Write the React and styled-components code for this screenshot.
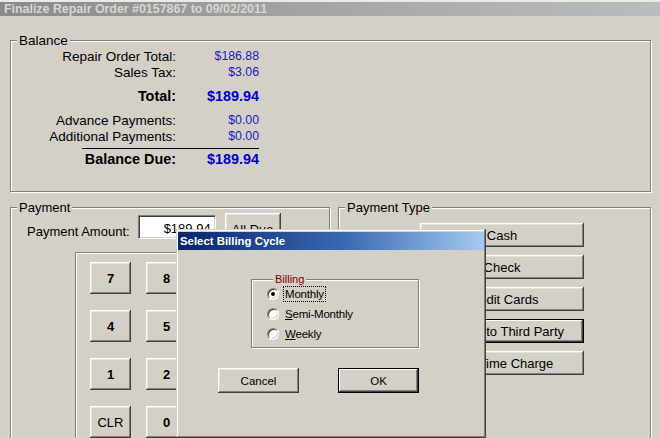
import React from "react";
import styled, { createGlobalStyle, css } from "styled-components";

const Global = createGlobalStyle`
  html, body { margin: 0; padding: 0; }
  body {
    width: 660px; height: 438px; overflow: hidden;
    background: #d4d0c8;
    font-family: "Liberation Sans", Arial, sans-serif;
    color: #000;
  }
`;

const Window = styled.div`
  position: relative;
  width: 660px;
  height: 438px;
  box-sizing: border-box;
  border-top: 2px solid #ecebe8;
  display: flex;
  flex-direction: column;
  overflow: hidden;
`;

const TitleBar = styled.div`
  height: 20px;
  padding-left: 4px;
  display: flex;
  align-items: center;
  background: linear-gradient(90deg, #8a8a8a 0%, #a6a6a6 50%, #b9bdc0 100%);
  color: #d8d6d0;
  font-weight: bold;
  font-size: 12.4px;
  white-space: nowrap;
`;

const Body = styled.div`
  flex: 1;
  padding: 17px 9px 0 10px;
  display: flex;
  flex-direction: column;
`;

const etched = css`
  border: 1px solid #808080;
  box-shadow: 1px 1px 0 #fff, inset 1px 1px 0 #fff;
`;

const Group = styled.fieldset`
  ${etched};
  margin: 0;
  padding: 0;
  min-width: 0;
  box-sizing: border-box;
`;

const Legend = styled.legend`
  margin-left: 6px;
  padding: 0 2px;
  font-size: ${(p) => p.$size || 13}px;
  line-height: 15px;
  color: ${(p) => p.$color || "#000"};
  background: #d4d0c8;
`;

const BalanceGroup = styled(Group)`
  width: 641px;
  height: 159px;
`;

const Rows = styled.div`
  display: flex;
  flex-direction: column;
`;

const Row = styled.div`
  display: grid;
  grid-template-columns: 165px 83px;
  height: 16px;
  align-items: center;
  margin-top: ${(p) => p.$mt || 0}px;
`;

const Label = styled.span`
  text-align: right;
  font-size: ${(p) => (p.$bold ? 14.4 : 13.5)}px;
  font-weight: ${(p) => (p.$bold ? "bold" : "normal")};
  white-space: nowrap;
`;

const Value = styled.span`
  text-align: right;
  font-size: ${(p) => (p.$bold ? 14.4 : 12.3)}px;
  font-weight: ${(p) => (p.$bold ? "bold" : "normal")};
  color: ${(p) => (p.$bold ? "#0000cc" : "#1818c4")};
  white-space: nowrap;
`;

const Divider = styled.div`
  height: 1px;
  width: 177px;
  margin: 4px 0 0 71px;
  background: #000;
`;

const LowerRow = styled.div`
  display: flex;
  gap: 8px;
  margin-top: 8px;
  flex: 1;
`;

const PaymentGroup = styled(Group)`
  width: 320px;
  height: 260px;
`;

const TypeGroup = styled(Group)`
  width: 313px;
  height: 260px;
`;

const AmountRow = styled.div`
  display: flex;
  align-items: flex-start;
  height: 24px;
  padding-left: 16px;
`;

const AmountLabel = styled.span`
  font-size: 13px;
  margin-top: 9px;
  white-space: nowrap;
`;

const TextBox = styled.div`
  width: 78px;
  height: 24px;
  margin: 0 0 0 8px;
  box-sizing: border-box;
  background: #fff;
  border: 1px solid;
  border-color: #808080 #fff #fff #808080;
  box-shadow: inset 1px 1px 0 #404040, inset -1px -1px 0 #d4d0c8;
  font-size: 13px;
  text-align: right;
  padding: 5px 4px 0 0;
`;

const raised = css`
  background: #d4d0c8;
  border: none;
  box-sizing: border-box;
  box-shadow: inset -1px -1px 0 #404040, inset 1px 1px 0 #fff,
    inset -2px -2px 0 #808080, inset 2px 2px 0 #e4e2dc;
  font-family: "Liberation Sans", Arial, sans-serif;
  color: #000;
  padding: 0;
`;

const Button = styled.button`
  ${raised};
  flex-shrink: 0;
  width: ${(p) => p.$w}px;
  height: ${(p) => p.$h}px;
  font-size: ${(p) => p.$size || 13}px;
  font-weight: ${(p) => (p.$bold ? "bold" : "normal")};
  ${(p) =>
    p.$default &&
    css`
      outline: 1px solid #000;
      outline-offset: -1px;
      box-shadow: inset -2px -2px 0 #404040, inset 2px 2px 0 #fff,
        inset -3px -3px 0 #808080, inset 1px 1px 0 #000;
    `}
`;

const SideButton = styled(Button)`
  margin: -2px 0 0 9px;
`;

const Keypad = styled.div`
  ${etched};
  margin: 13px 0 0 64px;
  width: 200px;
  height: 200px;
  box-sizing: border-box;
  padding: 9px 0 0 14px;
  display: grid;
  grid-template-columns: repeat(3, 41px);
  grid-auto-rows: 32px;
  column-gap: 15px;
  row-gap: 16px;
`;

const TypeList = styled.div`
  display: flex;
  flex-direction: column;
  gap: 8px;
  padding: 8px 0 0 81px;
`;

/* Dialog */
const Dialog = styled.div`
  position: absolute;
  left: 176px;
  top: 227px;
  width: 310px;
  height: 209px;
  box-sizing: border-box;
  background: #d4d0c8;
  padding: 2px;
  box-shadow: inset -1px -1px 0 #404040, inset 1px 1px 0 #d4d0c8,
    inset -2px -2px 0 #808080, inset 2px 2px 0 #fff;
  display: flex;
  flex-direction: column;
`;

const DialogTitle = styled.div`
  height: 18px;
  margin: 1px 0 0 0;
  padding-left: 2px;
  display: flex;
  align-items: center;
  background: linear-gradient(90deg, #0a246a 0%, #3a6ab4 55%, #a6caf0 100%);
  color: #fff;
  font-weight: bold;
  font-size: 11.4px;
  white-space: nowrap;
`;

const DialogBody = styled.div`
  display: flex;
  flex-direction: column;
  padding: 22px 0 0 0;
`;

const BillingGroup = styled(Group)`
  width: 168px;
  margin-left: 73px;
  height: 76px;
  padding: 0 0 0 15px;
`;

const RadioList = styled.div`
  display: flex;
  flex-direction: column;
  margin-top: -3px;
`;

const RadioRow = styled.label`
  display: flex;
  align-items: center;
  height: 20px;
  font-size: 11.5px;
`;

const RadioCircle = styled.span`
  width: 12px;
  height: 12px;
  box-sizing: border-box;
  border-radius: 50%;
  background: #fff;
  border: 1px solid;
  border-color: #808080 #fff #fff #808080;
  box-shadow: inset 1px 1px 0 #404040, inset -1px -1px 0 #d4d0c8;
  display: flex;
  align-items: center;
  justify-content: center;
  margin-right: 5px;
  &::after {
    content: "";
    display: ${(p) => (p.$checked ? "block" : "none")};
    width: 4px;
    height: 4px;
    border-radius: 50%;
    background: #000;
  }
`;

const RadioText = styled.span`
  padding: 0 1px;
  line-height: 14px;
  letter-spacing: -0.2px;
  outline: ${(p) => (p.$focus ? "1px dotted #000" : "none")};
  u { text-decoration: underline; }
`;

const DialogButtons = styled.div`
  display: flex;
  gap: 39px;
  margin: 20px 0 0 40px;
`;

const balance = [
  { l: "Repair Order Total:", v: "$186.88" },
  { l: "Sales Tax:", v: "$3.06" },
  { l: "Total:", v: "$189.94", bold: true, mt: 8 },
  { l: "Advance Payments:", v: "$0.00", mt: 8 },
  { l: "Additional Payments:", v: "$0.00" },
];

const keys = ["7", "8", "9", "4", "5", "6", "1", "2", "3", "CLR", "0", "."];
const types = ["Cash", "Check", "Credit Cards", "Charge to Third Party", "One Time Charge"];

export default function App() {
  return (
    <>
      <Global />
      <Window>
        <TitleBar>Finalize Repair Order #0157867 to 09/02/2011</TitleBar>
        <Body>
          <BalanceGroup>
            <Legend $size={13.5}>Balance</Legend>
            <Rows>
              {balance.map((r) => (
                <Row key={r.l} $mt={r.mt}>
                  <Label $bold={r.bold}>{r.l}</Label>
                  <Value $bold={r.bold}>{r.v}</Value>
                </Row>
              ))}
              <Divider />
              <Row $mt={2}>
                <Label $bold>Balance Due:</Label>
                <Value $bold>$189.94</Value>
              </Row>
            </Rows>
          </BalanceGroup>
          <LowerRow>
            <PaymentGroup>
              <Legend>Payment</Legend>
              <AmountRow>
                <AmountLabel>Payment Amount:</AmountLabel>
                <TextBox>$189.94</TextBox>
                <SideButton $w={56} $h={32}>All Due</SideButton>
              </AmountRow>
              <Keypad>
                {keys.map((k) => (
                  <Button key={k} $w={41} $h={32} $bold={k !== "CLR"}>
                    {k}
                  </Button>
                ))}
              </Keypad>
            </PaymentGroup>
            <TypeGroup>
              <Legend>Payment Type</Legend>
              <TypeList>
                {types.map((t, i) => (
                  <Button key={t} $w={164} $h={24} $default={i === 3}>
                    {t}
                  </Button>
                ))}
              </TypeList>
            </TypeGroup>
          </LowerRow>
        </Body>

        <Dialog>
          <DialogTitle>Select Billing Cycle</DialogTitle>
          <DialogBody>
            <BillingGroup>
              <Legend $size={11} $color="#800000">Billing</Legend>
              <RadioList>
                <RadioRow>
                  <RadioCircle $checked />
                  <RadioText $focus>Monthly</RadioText>
                </RadioRow>
                <RadioRow>
                  <RadioCircle />
                  <RadioText>
                    <u>S</u>emi-Monthly
                  </RadioText>
                </RadioRow>
                <RadioRow>
                  <RadioCircle />
                  <RadioText>
                    <u>W</u>eekly
                  </RadioText>
                </RadioRow>
              </RadioList>
            </BillingGroup>
            <DialogButtons>
              <Button $w={81} $h={25} $size={11.5}>Cancel</Button>
              <Button $w={81} $h={25} $size={11.5} $default>OK</Button>
            </DialogButtons>
          </DialogBody>
        </Dialog>
      </Window>
    </>
  );
}
